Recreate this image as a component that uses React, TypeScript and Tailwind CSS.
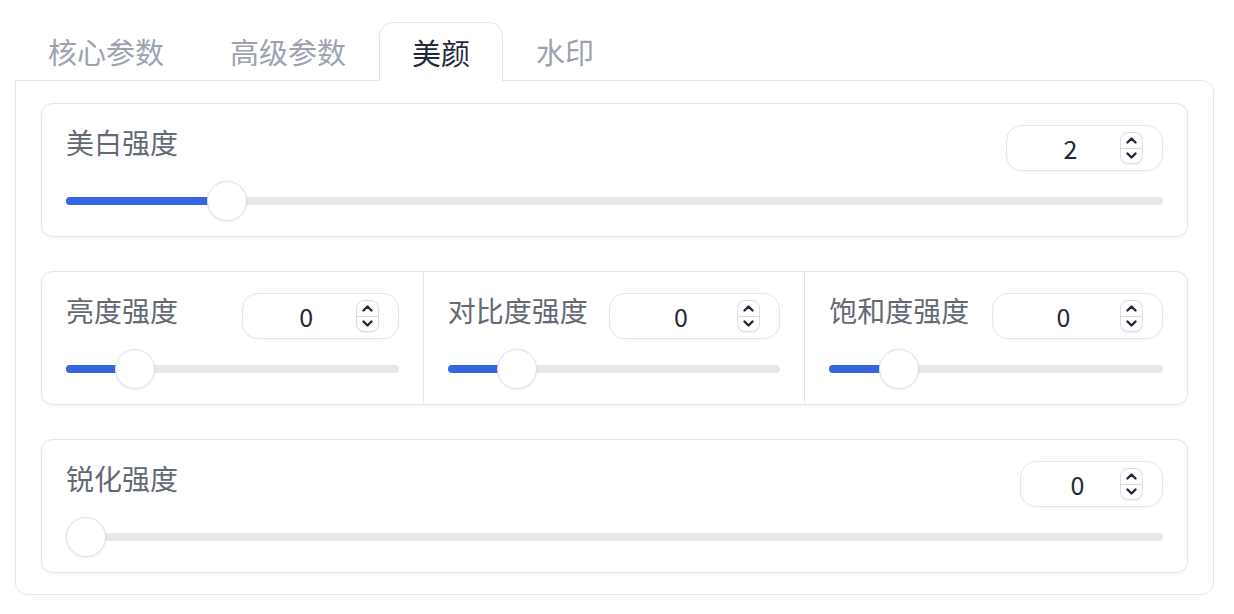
import React from "react"

// Beauty settings panel — tabs on top, slider cards below.

const TABS = ["核心参数", "高级参数", "美颜", "水印"]
const ACTIVE = 2

function Spinner() {
  return (
    <div className="flex h-[32px] w-[23px] shrink-0 flex-col overflow-hidden rounded-[8px] border border-[#d9dbe0] bg-white shadow-[0_1px_1px_rgba(0,0,0,0.05)]">
      <div className="flex flex-1 items-center justify-center border-b border-[#d9dbe0]">
        <svg width="11" height="7" viewBox="0 0 11 7" fill="none">
          <path d="M1.5 5.5 L5.5 1.5 L9.5 5.5" stroke="#1f2937" strokeWidth="2.4" strokeLinecap="round" strokeLinejoin="round" />
        </svg>
      </div>
      <div className="flex flex-1 items-center justify-center">
        <svg width="11" height="7" viewBox="0 0 11 7" fill="none">
          <path d="M1.5 1.5 L5.5 5.5 L9.5 1.5" stroke="#1f2937" strokeWidth="2.4" strokeLinecap="round" strokeLinejoin="round" />
        </svg>
      </div>
    </div>
  )
}

function NumberBox({ value, width }: { value: number; width: string }) {
  return (
    <div
      className={`flex h-[46px] shrink-0 items-center rounded-[16px] border border-[#e5e7eb] bg-white pl-[14px] pr-[19px] shadow-[0_1px_2px_rgba(0,0,0,0.04)] ${width}`}
    >
      <span className="flex-1 text-center text-[25px] leading-none text-[#1f2937]">{value}</span>
      <Spinner />
    </div>
  )
}

function Slider({ pct }: { pct: number }) {
  return (
    <div className="relative mt-[10px] h-[40px]">
      <div className="absolute left-0 right-0 top-1/2 h-[8px] -translate-y-1/2 rounded-full bg-[#e6e7eb]" />
      {pct > 0 && (
        <div
          className="absolute left-0 top-1/2 h-[8px] -translate-y-1/2 rounded-full bg-[#3565e2]"
          style={{ width: `calc(${pct} * (100% - 40px) + 20px)` }}
        />
      )}
      <div
        className="absolute top-0 h-[40px] w-[40px] rounded-full border border-[#dfe0e4] bg-white shadow-[0_1px_3px_rgba(0,0,0,0.08)]"
        style={{ left: `calc(${pct} * (100% - 40px))` }}
      />
    </div>
  )
}

function Field({ label, value, pct, boxWidth }: { label: string; value: number; pct: number; boxWidth: string }) {
  return (
    <div className="px-[24px] pb-[15px] pt-[21px]">
      <div className="flex h-[46px] items-center justify-between">
        <span className="mb-[12px] whitespace-nowrap text-[28px] leading-none text-[#646a73]">{label}</span>
        <NumberBox value={value} width={boxWidth} />
      </div>
      <Slider pct={pct} />
    </div>
  )
}

const CARD = "rounded-[12px] border border-[#e5e7eb] bg-white shadow-[0_1px_3px_rgba(0,0,0,0.06)]"

export default function App() {
  return (
    <div
      className="h-[614px] w-[1234px] bg-white pt-[22px]"
      style={{ fontFamily: '"Noto Sans CJK SC", "Noto Sans", sans-serif' }}
    >
      <div className="ml-[15px] w-[1199px]">
        {/* tabs */}
        <div className="relative z-10 -mb-px flex">
          {TABS.map((t, i) => (
            <div
              key={t}
              className={
                i === ACTIVE
                  ? "flex h-[59px] items-center rounded-t-[14px] border border-b-0 border-[#e5e7eb] bg-white px-[32px] text-[29px] leading-none text-[#1f2937]"
                  : "flex h-[59px] items-center border border-transparent px-[32px] text-[29px] leading-none text-[#9ca3af]"
              }
            >
              {t}
            </div>
          ))}
        </div>

        {/* panel */}
        <div className="flex flex-col gap-[34px] rounded-b-[12px] rounded-tr-[12px] border border-[#e5e7eb] px-[25px] pb-[21px] pt-[22px]">
          <div className={CARD}>
            <Field label="美白强度" value={2} pct={0.1335} boxWidth="w-[157px]" />
          </div>

          <div className={`${CARD} grid grid-cols-3 divide-x divide-[#e5e7eb]`}>
            <Field label="亮度强度" value={0} pct={0.168} boxWidth="w-[157px]" />
            <Field label="对比度强度" value={0} pct={0.168} boxWidth="w-[171px]" />
            <Field label="饱和度强度" value={0} pct={0.168} boxWidth="w-[171px]" />
          </div>

          <div className={CARD}>
            <Field label="锐化强度" value={0} pct={0} boxWidth="w-[143px]" />
          </div>
        </div>
      </div>
    </div>
  )
}
